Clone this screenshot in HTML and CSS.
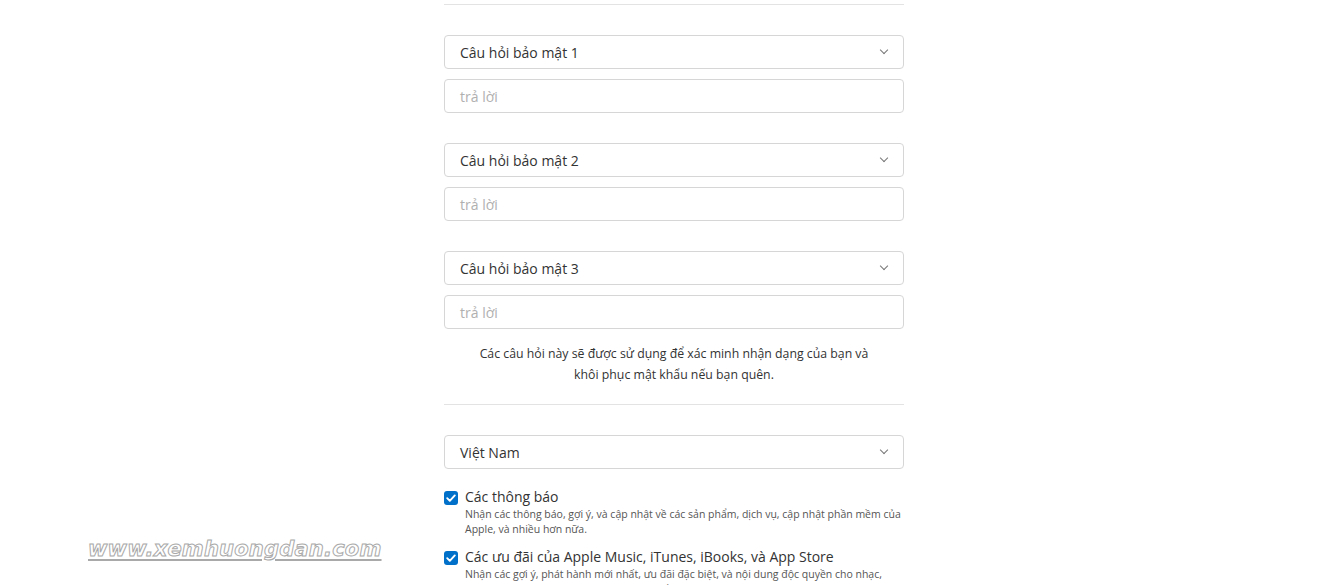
FILE: index.html
```html
<!DOCTYPE html>
<html lang="vi">
<head>
  <meta charset="UTF-8">
  <title>Tạo ID Apple</title>
  <link rel="stylesheet" href="styles.css">
</head>
<body>
  <div class="form">
    <hr class="divider top">

    <div class="question">
      <div class="select">Câu hỏi bảo mật 1<span class="chevron"></span></div>
      <div class="input">trả lời</div>
    </div>
    <div class="question">
      <div class="select">Câu hỏi bảo mật 2<span class="chevron"></span></div>
      <div class="input">trả lời</div>
    </div>
    <div class="question">
      <div class="select">Câu hỏi bảo mật 3<span class="chevron"></span></div>
      <div class="input">trả lời</div>
    </div>

    <p class="note">Các câu hỏi này sẽ được sử dụng để xác minh nhận dạng của bạn và<br>khôi phục mật khẩu nếu bạn quên.</p>

    <hr class="divider">

    <div class="select country">Việt Nam<span class="chevron"></span></div>

    <div class="check">
      <span class="box"><svg viewBox="0 0 14 14"><path d="M3.2 7.2l2.6 2.6 5-5.4" fill="none" stroke="#fff" stroke-width="1.9" stroke-linecap="round" stroke-linejoin="round"/></svg></span>
      <div class="check-text">
        <div class="check-title">Các thông báo</div>
        <div class="check-desc">Nhận các thông báo, gợi ý, và cập nhật về các sản phẩm, dịch vụ, cập nhật phần mềm của<br>Apple, và nhiều hơn nữa.</div>
      </div>
    </div>
    <div class="check">
      <span class="box"><svg viewBox="0 0 14 14"><path d="M3.2 7.2l2.6 2.6 5-5.4" fill="none" stroke="#fff" stroke-width="1.9" stroke-linecap="round" stroke-linejoin="round"/></svg></span>
      <div class="check-text">
        <div class="check-title">Các ưu đãi của Apple Music, iTunes, iBooks, và App Store</div>
        <div class="check-desc">Nhận các gợi ý, phát hành mới nhất, ưu đãi đặc biệt, và nội dung độc quyền cho nhạc,<br>ứng dụng, phim, TV, sách, podcast, và nhiều hơn nữa.</div>
      </div>
    </div>
  </div>

  <div class="watermark">www.xemhuongdan.com</div>
</body>
</html>
```

FILE: styles.css
```css
html, body {
  margin: 0;
  padding: 0;
}
body {
  font-family: "Open Sans", "Noto Sans", sans-serif;
  color: #333;
  background-color: #fff;
  overflow: hidden;
  height: 585px;
  position: relative;
  padding-left: 4px;
}
.form {
  width: 460px;
  margin: 0 auto;
  padding-top: 4px;
}
.divider {
  border: 0;
  border-top: 1px solid #e3e3e3;
  margin: 0;
}
.divider.top {
  margin-bottom: 30px;
}
.question {
  display: flex;
  flex-direction: column;
  gap: 10px;
  margin-bottom: 30px;
}
.select, .input {
  height: 34px;
  box-sizing: border-box;
  border: 1px solid #d6d6d6;
  border-radius: 4px;
  padding: 0 15px;
  display: flex;
  align-items: center;
  font-size: 14px;
  position: relative;
}
.input {
  color: #b0b0b0;
}
.chevron {
  position: absolute;
  right: 16px;
  top: 11px;
  width: 5px;
  height: 5px;
  border-right: 1px solid #777;
  border-bottom: 1px solid #777;
  transform: rotate(45deg);
}
.note {
  margin: -16px 0 0;
  font-size: 12.3px;
  line-height: 21px;
  text-align: center;
  color: #333;
}
.note + .divider {
  margin-top: 19px;
}
.country {
  margin-top: 30px;
  margin-bottom: 18px;
}
.check {
  display: flex;
  gap: 7px;
  margin-bottom: 10px;
}
.box {
  flex: none;
  width: 14px;
  height: 14px;
  margin-top: 4px;
  border-radius: 3px;
  background-color: #0070c9;
  display: flex;
}
.box svg {
  width: 14px;
  height: 14px;
}
.check-title {
  font-size: 14px;
  line-height: 20px;
  color: #333;
}
.check-desc {
  font-size: 10.5px;
  line-height: 15px;
  color: #555;
  white-space: nowrap;
}
.watermark {
  position: absolute;
  left: 88px;
  top: 537px;
  font-family: "DejaVu Sans", sans-serif;
  font-size: 21px;
  font-weight: bold;
  font-style: italic;
  letter-spacing: 0.2px;
  color: #fff;
  -webkit-text-stroke: 1px #a9a9a9;
  text-decoration: underline;
  text-decoration-color: #a9a9a9;
  text-decoration-thickness: 2px;
  text-underline-offset: 3px;
}
```
